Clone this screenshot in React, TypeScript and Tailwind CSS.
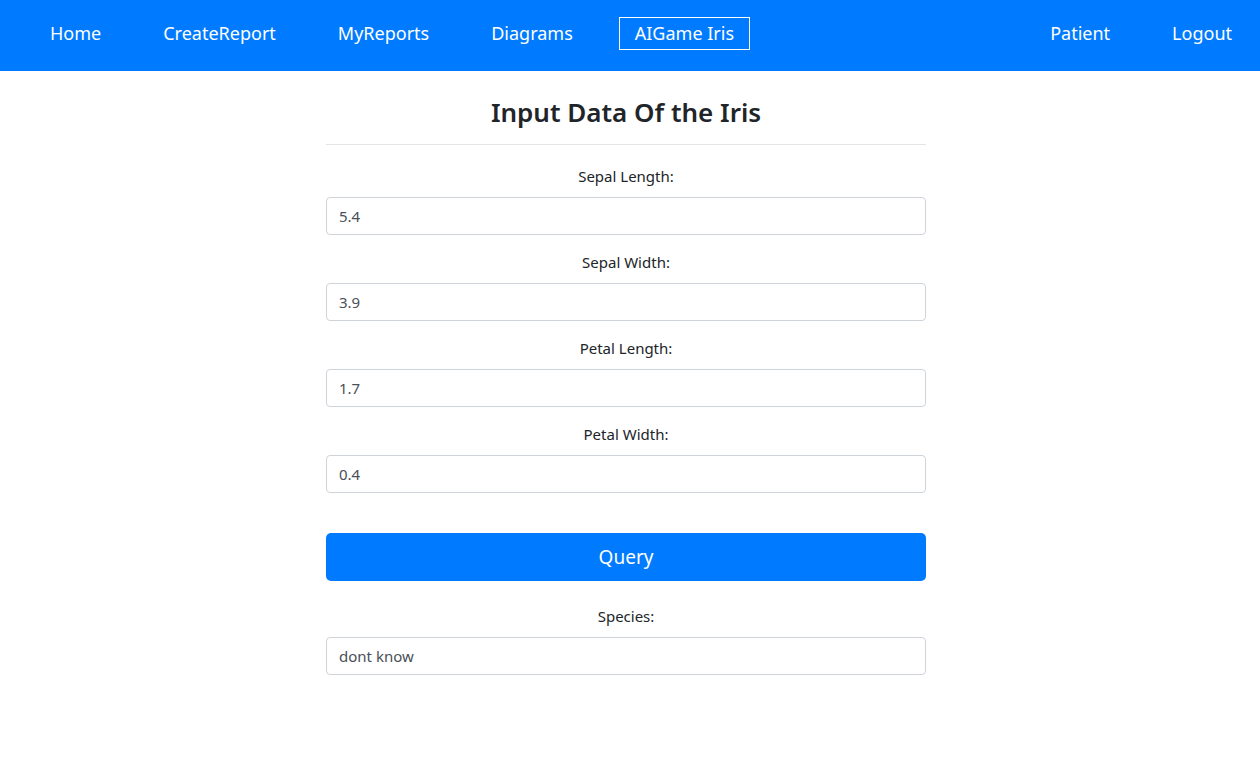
import React, { useState } from 'react';

const navLinks = ['Home', 'CreateReport', 'MyReports', 'Diagrams', 'AIGame Iris'];

const fields = [
  { label: 'Sepal Length:', value: '5.4' },
  { label: 'Sepal Width:', value: '3.9' },
  { label: 'Petal Length:', value: '1.7' },
  { label: 'Petal Width:', value: '0.4' },
];

const App: React.FC = () => {
  const [values, setValues] = useState(fields.map((f) => f.value));
  const [species, setSpecies] = useState('dont know');

  return (
    <div className="min-h-screen bg-white text-[#212529] [font-family:'Noto_Sans',sans-serif]">
      <header className="bg-[#007bff] h-[71px] flex items-center justify-between pl-[34px] pr-[12px] pb-[5px]">
        <nav className="flex items-center gap-[30px]">
          {navLinks.map((name) => (
            <a
              key={name}
              href="#"
              className={`text-white text-[18px] leading-[31px] px-[15px] border ${
                name === 'AIGame Iris' ? 'border-white' : 'border-transparent'
              }`}
            >
              {name}
            </a>
          ))}
        </nav>
        <nav className="flex items-center gap-[30px]">
          <a href="#" className="text-white text-[18px] leading-[31px] px-[15px] border border-transparent">Patient</a>
          <a href="#" className="text-white text-[18px] leading-[31px] px-[15px] border border-transparent">Logout</a>
        </nav>
      </header>

      <main className="flex justify-center pr-[8px]">
        <div className="w-[600px] pt-[24px]">
          <h2 className="text-center text-[26px] font-semibold leading-[34px] pb-[15px] border-b border-[#e5e5e5]">
            Input Data Of the Iris
          </h2>

          <div className="flex flex-col pt-[20px] gap-[16px]">
            {fields.map((f, i) => (
              <div key={f.label} className="flex flex-col">
                <label className="text-center text-[15px] leading-[22px] mb-[10px]">{f.label}</label>
                <input
                  value={values[i]}
                  onChange={(e) => {
                    const next = [...values];
                    next[i] = e.target.value;
                    setValues(next);
                  }}
                  className="h-[38px] border border-[#ced4da] rounded-[4px] px-[12px] text-[15px] text-[#495057] outline-none"
                />
              </div>
            ))}
          </div>

          <button className="mt-[40px] w-full h-[48px] bg-[#007bff] text-white text-[19px] rounded-[5px]">
            Query
          </button>

          <div className="flex flex-col mt-[24px]">
            <label className="text-center text-[15px] leading-[22px] mb-[10px]">Species:</label>
            <input
              value={species}
              onChange={(e) => setSpecies(e.target.value)}
              className="h-[38px] border border-[#ced4da] rounded-[4px] px-[12px] text-[15px] text-[#495057] outline-none"
            />
          </div>
        </div>
      </main>
    </div>
  );
};

export default App;
